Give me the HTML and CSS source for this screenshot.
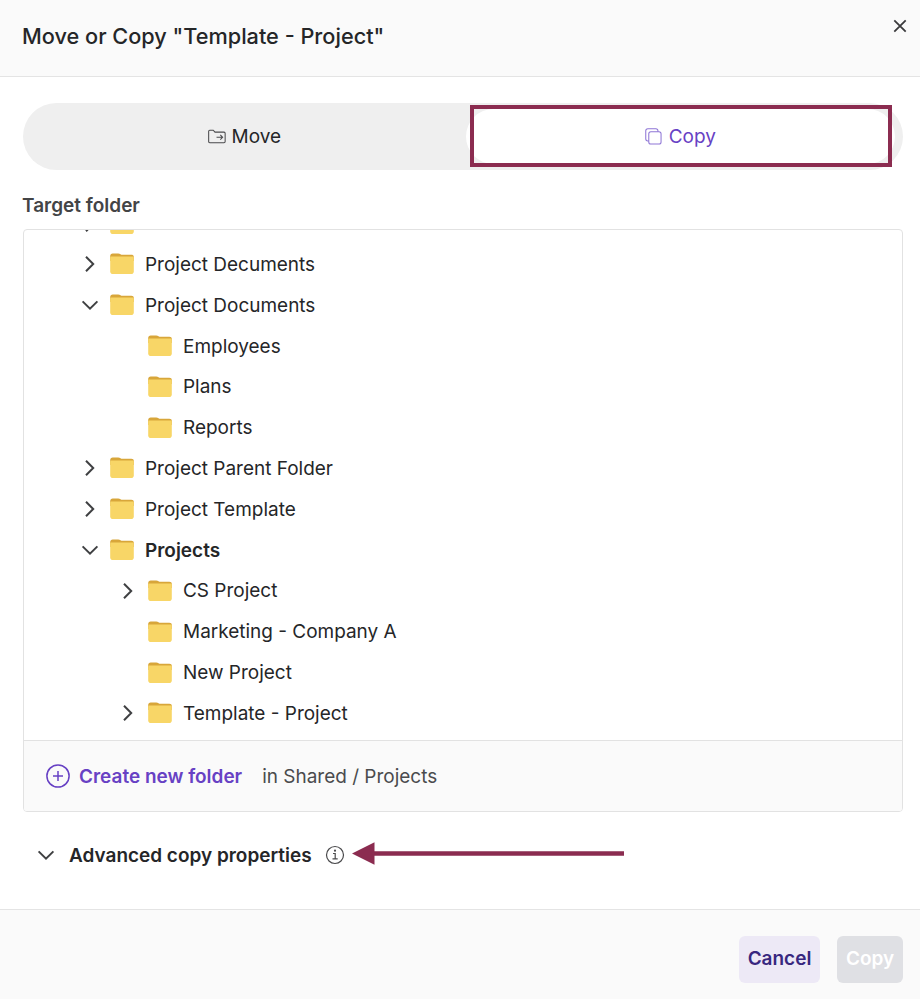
FILE: index.html
```html
<!DOCTYPE html>
<html lang="en">
<head>
  <meta charset="UTF-8">
  <title>Move or Copy</title>
  <link rel="stylesheet" href="styles.css">
</head>
<body>
  <svg class="sprite" aria-hidden="true">
    <symbol id="folder" viewBox="0 0 24 22">
      <path d="M.2 8V3C.2 1.500 1.200.5 2.700.5h5.500c1 0 1.700.3 2.300.8l.9.500h10c1.500 0 2.400.8 2.400 2.200V8z" fill="#d8a63a"/>
      <path d="M.2 4.800C.2 4 .6 3.600 1.400 3.600h21.200c.8 0 1.200.4 1.200 1.200v13.400c0 1.900-.9 2.800-2.800 2.800H3C1.100 21 .2 20.100.2 18.200z" fill="#f8d667"/>
    </symbol>
    <symbol id="right" viewBox="0 0 18 18">
      <path d="M5 1.800 12.200 9 5 16.200"/>
    </symbol>
    <symbol id="down" viewBox="0 0 18 18">
      <path d="M1.600 5.400 9 12.600l7.400-7.200"/>
    </symbol>
  </svg>

  <div class="dialog">
    <header class="dialog-header">
      <h1>Move or Copy "Template - Project"</h1>
      <svg class="close" viewBox="0 0 14 14"><path d="M1.300 1.300l11.400 11.400M12.700 1.300L1.300 12.700"/></svg>
    </header>

    <main class="dialog-body">
      <div class="tabs">
        <div class="tab">
          <svg class="move-icon" viewBox="0 0 19 15"><path d="M.7 12.800V1.900C.7 1.200 1.100.8 1.800.8h3.700L7.400 2.900h9.500c.8 0 1.200.4 1.200 1.200v8.700c0 .8-.4 1.200-1.200 1.200h-15C1.100 14 .7 13.600.7 12.800zM9 8.300h6.400M13 5.900l2.400 2.400L13 10.700"/></svg>
          <span>Move</span>
        </div>
        <div class="tab active">
          <svg class="copy-icon" viewBox="0 0 18 18"><rect x="4" y="4" width="13" height="13" rx="2.200"/><path d="M4 13.700H3C1.600 13.700.8 12.900.8 11.500V3C.8 1.600 1.600.8 3 .8h8.500c1.400 0 2.200.8 2.200 2.200v1"/></svg>
          <span>Copy</span>
        </div>
        <div class="highlight"></div>
      </div>

      <h2>Target folder</h2>
      <div class="folder-box">
        <div class="tree-view">
          <ul class="tree">
            <li class="row"><svg class="arrow"><use href="#right"/></svg><svg class="folder"><use href="#folder"/></svg><span>Private files</span></li>
            <li class="row"><svg class="arrow"><use href="#right"/></svg><svg class="folder"><use href="#folder"/></svg><span>Project Decuments</span></li>
            <li class="row"><svg class="arrow"><use href="#down"/></svg><svg class="folder"><use href="#folder"/></svg><span>Project Documents</span></li>
            <li class="row child"><svg class="arrow"></svg><svg class="folder"><use href="#folder"/></svg><span>Employees</span></li>
            <li class="row child"><svg class="arrow"></svg><svg class="folder"><use href="#folder"/></svg><span>Plans</span></li>
            <li class="row child"><svg class="arrow"></svg><svg class="folder"><use href="#folder"/></svg><span>Reports</span></li>
            <li class="row"><svg class="arrow"><use href="#right"/></svg><svg class="folder"><use href="#folder"/></svg><span>Project Parent Folder</span></li>
            <li class="row"><svg class="arrow"><use href="#right"/></svg><svg class="folder"><use href="#folder"/></svg><span>Project Template</span></li>
            <li class="row selected"><svg class="arrow"><use href="#down"/></svg><svg class="folder"><use href="#folder"/></svg><span>Projects</span></li>
            <li class="row child"><svg class="arrow"><use href="#right"/></svg><svg class="folder"><use href="#folder"/></svg><span>CS Project</span></li>
            <li class="row child"><svg class="arrow"></svg><svg class="folder"><use href="#folder"/></svg><span>Marketing - Company A</span></li>
            <li class="row child"><svg class="arrow"></svg><svg class="folder"><use href="#folder"/></svg><span>New Project</span></li>
            <li class="row child"><svg class="arrow"><use href="#right"/></svg><svg class="folder"><use href="#folder"/></svg><span>Template - Project</span></li>
          </ul>
        </div>
        <div class="create-bar">
          <svg class="plus" viewBox="0 0 24 24"><circle cx="12" cy="12" r="11.100"/><path d="M12 7v10M7 12h10"/></svg>
          <span class="create-link">Create new folder</span>
          <span class="create-path">in Shared / Projects</span>
        </div>
      </div>

      <div class="advanced">
        <svg class="arrow"><use href="#down"/></svg>
        <span class="advanced-title">Advanced copy properties</span>
        <svg class="info" viewBox="0 0 20 20"><circle cx="10" cy="10" r="8.500"/><path d="M8 8.500h2.200v5.300M7.500 13.900h5.200"/><circle class="dot" cx="10" cy="5.700" r="1.100"/></svg>
        <svg class="pointer" viewBox="0 0 272 24"><path d="M0 11.500 22.500.3v22.400zM22 9.200h250v4.600H22z"/></svg>
      </div>
    </main>

    <footer class="dialog-footer">
      <button class="btn cancel">Cancel</button>
      <button class="btn submit" disabled>Copy</button>
    </footer>
  </div>
</body>
</html>
```

FILE: styles.css
```css
* {
  box-sizing: border-box;
}

body {
  margin: 0;
  font-family: Inter, "Liberation Sans", sans-serif;
  font-size: 18.98px;
  color: #252628;
  background: #fff;
}

svg {
  display: block;
  flex: none;
  fill: none;
}

.sprite {
  position: absolute;
  width: 0;
  height: 0;
}

.dialog {
  display: flex;
  flex-direction: column;
  width: 920px;
  height: 999px;
  overflow: hidden;
}

.dialog-header {
  display: flex;
  justify-content: space-between;
  height: 77px;
  padding: 19px 13px 0 22px;
  background: #fafafa;
  border-bottom: 1px solid #e4e4e4;
}

h1 {
  margin: 0;
  font-size: 21.7px;
  font-weight: 500;
  line-height: 34px;
}

.close {
  width: 14px;
  height: 14px;
  stroke: #3a3a3c;
  stroke-width: 1.8;
}

.dialog-body {
  flex: 1;
  padding: 26px 17px 0 23px;
}

/* move / copy switch */
.tabs {
  position: relative;
  display: flex;
  height: 67px;
  width: 880px;
  padding: 6px 8px 6px 0;
  border-radius: 34px;
  background: #efefef;
}

.tab {
  display: flex;
  align-items: center;
  justify-content: center;
  width: 443px;
  gap: 6px;
}

.tab.active {
  width: 430px;
  gap: 7px;
  border-radius: 28px;
  background: #fff;
  color: #6741c4;
}

.move-icon {
  width: 18px;
  height: 15px;
  stroke: #4a4a4c;
  stroke-width: 1.1;
}

.copy-icon {
  width: 17px;
  height: 17px;
  stroke: #8f76d6;
  stroke-width: 1.1;
}

.highlight {
  position: absolute;
  left: 447px;
  top: 2px;
  width: 422px;
  height: 62px;
  border: 4px solid #8b2c50;
}

h2 {
  margin: 24px 0 12px -1px;
  font-size: 19px;
  font-weight: 600;
  line-height: 23px;
  color: #434446;
}

.folder-box {
  width: 880px;
  border: 1px solid #e2e2e2;
  border-radius: 4px;
  overflow: hidden;
}

.tree-view {
  height: 510px;
  overflow: hidden;
}

.tree {
  margin: -26.8px 0 0;
  padding: 0;
  list-style: none;
}

.row {
  display: flex;
  align-items: center;
  height: 40.82px;
  padding-left: 57px;
}

.row.child {
  padding-left: 95px;
}

.row.selected {
  font-weight: 600;
}

.arrow {
  width: 18px;
  height: 18px;
  stroke: #3f4042;
  stroke-width: 2;
}

.folder {
  width: 24px;
  height: 22px;
  margin: 0 11px;
}

.create-bar {
  display: flex;
  align-items: center;
  height: 71px;
  padding-left: 22px;
  border-top: 1px solid #e2e2e2;
  background: #fafafa;
}

.plus {
  width: 24px;
  height: 24px;
  margin-right: 9px;
  stroke: #6741c4;
  stroke-width: 1.5;
}

.create-link {
  margin-right: 20px;
  font-weight: 600;
  color: #6741c4;
}

.create-path {
  color: #4a4b4d;
}

.advanced {
  display: flex;
  align-items: center;
  height: 40px;
  margin-top: 23px;
  padding-left: 14px;
}

.advanced-title {
  margin: 0 13px 0 14px;
  font-weight: 600;
}

.info {
  width: 20px;
  height: 20px;
  stroke: #4a4a4c;
  stroke-width: 1.2;
}

.info .dot {
  fill: #4a4a4c;
  stroke: none;
}

.pointer {
  width: 272px;
  height: 24px;
  margin: -2px 0 0 7px;
  fill: #8b2c50;
}

.dialog-footer {
  display: flex;
  justify-content: flex-end;
  gap: 17px;
  height: 90px;
  padding: 26px 17px 0 0;
  border-top: 1px solid #e4e4e4;
  background: #fafafa;
}

.btn {
  height: 47px;
  padding: 0 0 2px;
  border: 0;
  border-radius: 6px;
  font: inherit;
  font-weight: 600;
}

.cancel {
  width: 81px;
  background: #ede9f6;
  color: #38277f;
}

.submit {
  width: 66px;
  background: #dfe0e4;
  color: #fff;
}
```
